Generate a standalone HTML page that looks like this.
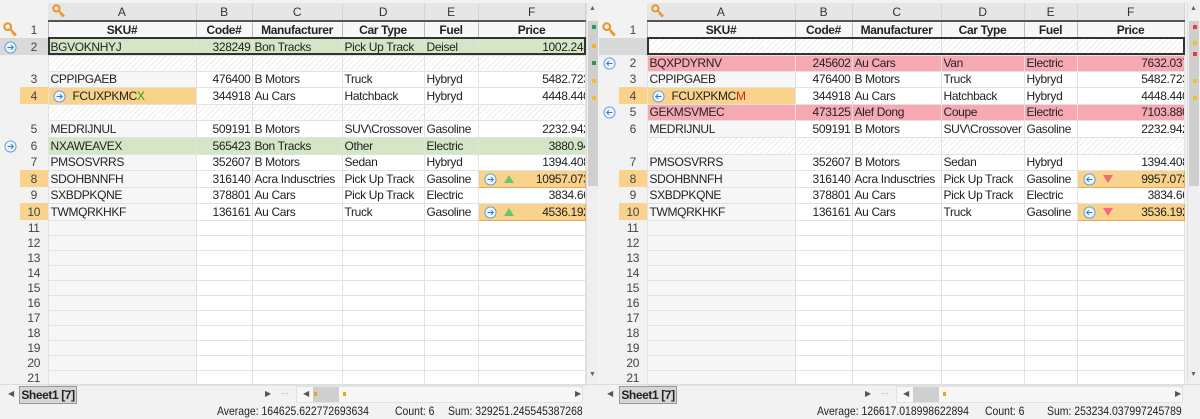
<!DOCTYPE html>
<html><head><meta charset="utf-8"><style>
*{margin:0;padding:0;box-sizing:border-box}
body{width:1200px;height:419px;background:#f2f2f2;font-family:"Liberation Sans",sans-serif;font-size:12px;color:#222;position:relative;overflow:hidden}
.pane{position:absolute;top:3px;width:586px}
table{border-collapse:collapse;table-layout:fixed;width:585px;letter-spacing:-0.35px}
td{border:1px solid #e2e2e2;white-space:nowrap;overflow:hidden;padding:0 2px;line-height:14px;vertical-align:middle;background:#fff}
td.i,td.n{border:none;background:#f2f2f2;text-align:center;color:#444;padding:0}
td.a{background:#f6f6f6}
td.r{text-align:right;padding-right:0}
td.r span.v{margin-right:-5px}
tr.h td{background:#e6e6e6;border:none;border-right:1px solid #d4d4d4;text-align:center;color:#333;border-bottom:2px solid #555}
tr.h td.i,tr.h td.n{background:#f2f2f2;border:none}
tr.t td{font-weight:bold;text-align:center;background:#f7f7f7;border:1px solid #bbb}
tr.t td.i,tr.t td.n{background:#f2f2f2;border:none;font-weight:normal}
tr.g td{background:#d3e6c6}
tr.p td{background:#f7a9b3}
tr.g td.i,tr.g td.n,tr.p td.i,tr.p td.n{background:#f2f2f2}
tr.s td{background:repeating-linear-gradient(135deg,#fff 0 3px,#ececec 3px 4px)}
tr.s td.i,tr.s td.n{background:#f2f2f2}
td.o{background:#f9d38b !important}
td.sel{background:#d9d9d9 !important}
svg.ci{width:13px;height:13px;vertical-align:-3px}
.up{display:inline-block;width:0;height:0;border-left:5px solid transparent;border-right:5px solid transparent;border-bottom:8px solid #6cc56c;vertical-align:0;margin-left:7px}
.dn{display:inline-block;width:0;height:0;border-left:5px solid transparent;border-right:5px solid transparent;border-top:8px solid #f06a7a;vertical-align:0;margin-left:7px}
.fi{float:left;margin-left:3px}
.vs{position:absolute;top:3px;width:12px;height:380px;background:#efefef;border-left:1px solid #ddd}
.th{position:absolute;left:1px;top:18px;width:10px;height:165px;background:#cfcfcf}
.mk{position:absolute;width:4px;height:4px}
.selbox{position:absolute;border:2px solid #333}
.stat{position:absolute;top:404px;font-size:12px;color:#222;white-space:nowrap;transform:scaleX(0.87);transform-origin:0 0}
.tab{position:absolute;top:386px;width:58px;height:18px;background:#d6d6d6;border:1px solid #999;font-weight:bold;font-size:12px;line-height:16px;text-align:center;white-space:nowrap;letter-spacing:-0.4px}
</style></head><body>
<svg width="0" height="0" style="position:absolute"><defs>
<symbol id="kr" viewBox="0 0 16 16"><circle cx="5" cy="5" r="3.6" fill="none" stroke="#e8952a" stroke-width="2.2"/><path d="M7.5 7.5 L14 14 M11 11 L9.5 12.5 M13 13 L11.5 14.5" stroke="#e8952a" stroke-width="2.2" fill="none"/></symbol>
<symbol id="ar" viewBox="0 0 14 14"><circle cx="7" cy="7" r="6" fill="#eef5fc" stroke="#5b9bd5"/><path d="M3.8 7 H10 M7.5 4.5 L10 7 L7.5 9.5" stroke="#3b7dc4" stroke-width="1.1" fill="none"/></symbol>
<symbol id="al" viewBox="0 0 14 14"><circle cx="7" cy="7" r="6" fill="#eef5fc" stroke="#5b9bd5"/><path d="M10.2 7 H4 M6.5 4.5 L4 7 L6.5 9.5" stroke="#3b7dc4" stroke-width="1.1" fill="none"/></symbol>
</defs></svg>

<!-- LEFT PANE -->
<div class="pane" style="left:0">
<table>
<colgroup><col style="width:20px"><col style="width:28px"><col style="width:148px"><col style="width:56px"><col style="width:90px"><col style="width:82px"><col style="width:54px"><col style="width:107px"></colgroup>
<tr class="h" style="height:18px"><td class="i"></td><td class="n"></td><td style="position:relative"><svg style="position:absolute;left:4px;top:1px;width:14px;height:14px"><use href="#kr"/></svg>A</td><td>B</td><td>C</td><td>D</td><td>E</td><td>F</td></tr>
<tr class="t" style="height:17px"><td class="i"><svg style="width:15px;height:15px;vertical-align:-3px"><use href="#kr"/></svg></td><td class="n">1</td><td>SKU#</td><td>Code#</td><td>Manufacturer</td><td>Car Type</td><td>Fuel</td><td>Price</td></tr>
<tr class="g" style="height:17px"><td class="i sel"><svg class="ci"><use href="#ar"/></svg></td><td class="n sel">2</td><td>BGVOKNHYJ</td><td class="r" style="padding-right:1px">328249</td><td>Bon Tracks</td><td>Pick Up Track</td><td>Deisel</td><td class="r"><span class="v">1002.245</span></td></tr>
<tr class="s" style="height:16px"><td class="i"></td><td class="n"></td><td></td><td></td><td></td><td></td><td></td><td></td></tr>
<tr style="height:16px"><td class="i"></td><td class="n">3</td><td class="a">CPPIPGAEB</td><td class="r" style="padding-right:1px">476400</td><td>B Motors</td><td>Truck</td><td>Hybryd</td><td class="r"><span class="v">5482.723</span></td></tr>
<tr style="height:17px"><td class="i"></td><td class="n o">4</td><td class="o">&nbsp;<svg class="ci"><use href="#ar"/></svg>&nbsp; FCUXPKMC<span style="color:#2a9a2a">X</span></td><td class="r" style="padding-right:1px">344918</td><td>Au Cars</td><td>Hatchback</td><td>Hybryd</td><td class="r"><span class="v">4448.440</span></td></tr>
<tr class="s" style="height:16px"><td class="i"></td><td class="n"></td><td></td><td></td><td></td><td></td><td></td><td></td></tr>
<tr style="height:17px"><td class="i"></td><td class="n">5</td><td class="a">MEDRIJNUL</td><td class="r" style="padding-right:1px">509191</td><td>B Motors</td><td>SUV\Crossover</td><td>Gasoline</td><td class="r"><span class="v">2232.942</span></td></tr>
<tr class="g" style="height:17px"><td class="i"><svg class="ci"><use href="#ar"/></svg></td><td class="n">6</td><td>NXAWEAVEX</td><td class="r" style="padding-right:1px">565423</td><td>Bon Tracks</td><td>Other</td><td>Electric</td><td class="r"><span class="v">3880.94</span></td></tr>
<tr style="height:16px"><td class="i"></td><td class="n">7</td><td class="a">PMSOSVRRS</td><td class="r" style="padding-right:1px">352607</td><td>B Motors</td><td>Sedan</td><td>Hybryd</td><td class="r"><span class="v">1394.408</span></td></tr>
<tr style="height:17px"><td class="i"></td><td class="n o">8</td><td class="a">SDOHBNNFH</td><td class="r" style="padding-right:1px">316140</td><td>Acra Indusctries</td><td>Pick Up Track</td><td>Gasoline</td><td class="r o" style="border:1px solid #e8a955"><span class="fi"><svg class="ci"><use href="#ar"/></svg><span class="up"></span></span><span class="v">10957.073</span></td></tr>
<tr style="height:16px"><td class="i"></td><td class="n">9</td><td class="a">SXBDPKQNE</td><td class="r" style="padding-right:1px">378801</td><td>Au Cars</td><td>Pick Up Track</td><td>Electric</td><td class="r"><span class="v">3834.66</span></td></tr>
<tr style="height:17px"><td class="i"></td><td class="n o">10</td><td class="a">TWMQRKHKF</td><td class="r" style="padding-right:1px">136161</td><td>Au Cars</td><td>Truck</td><td>Gasoline</td><td class="r o" style="border:1px solid #e8a955"><span class="fi"><svg class="ci"><use href="#ar"/></svg><span class="up"></span></span><span class="v">4536.192</span></td></tr>
<tr style="height:15px"><td class="i"></td><td class="n">11</td><td class="a"></td><td></td><td></td><td></td><td></td><td></td></tr>
<tr style="height:15px"><td class="i"></td><td class="n">12</td><td class="a"></td><td></td><td></td><td></td><td></td><td></td></tr>
<tr style="height:15px"><td class="i"></td><td class="n">13</td><td class="a"></td><td></td><td></td><td></td><td></td><td></td></tr>
<tr style="height:15px"><td class="i"></td><td class="n">14</td><td class="a"></td><td></td><td></td><td></td><td></td><td></td></tr>
<tr style="height:15px"><td class="i"></td><td class="n">15</td><td class="a"></td><td></td><td></td><td></td><td></td><td></td></tr>
<tr style="height:15px"><td class="i"></td><td class="n">16</td><td class="a"></td><td></td><td></td><td></td><td></td><td></td></tr>
<tr style="height:15px"><td class="i"></td><td class="n">17</td><td class="a"></td><td></td><td></td><td></td><td></td><td></td></tr>
<tr style="height:15px"><td class="i"></td><td class="n">18</td><td class="a"></td><td></td><td></td><td></td><td></td><td></td></tr>
<tr style="height:15px"><td class="i"></td><td class="n">19</td><td class="a"></td><td></td><td></td><td></td><td></td><td></td></tr>
<tr style="height:15px"><td class="i"></td><td class="n">20</td><td class="a"></td><td></td><td></td><td></td><td></td><td></td></tr>
<tr style="height:15px"><td class="i"></td><td class="n">21</td><td class="a"></td><td></td><td></td><td></td><td></td><td></td></tr>
</table>
</div>
<div class="selbox" style="left:48px;top:37px;width:538px;height:18px"></div>
<div class="vs" style="left:586px"><div style="position:absolute;top:2px;left:2px;font-size:7px;color:#666">&#9650;</div><div class="th"></div><div style="position:absolute;top:368px;left:2px;font-size:7px;color:#666">&#9660;</div>
<div class="mk" style="background:#2e9a5a;left:5px;top:22px"></div><div class="mk" style="background:#f0b030;left:5px;top:41px"></div><div class="mk" style="background:#2e9a5a;left:5px;top:58px"></div><div class="mk" style="background:#f0c030;left:5px;top:76px"></div><div class="mk" style="background:#f0c030;left:5px;top:93px"></div></div>

<!-- RIGHT PANE -->
<div class="pane" style="left:599px">
<table>
<colgroup><col style="width:20px"><col style="width:28px"><col style="width:148px"><col style="width:57px"><col style="width:89px"><col style="width:83px"><col style="width:53px"><col style="width:107px"></colgroup>
<tr class="h" style="height:18px"><td class="i"></td><td class="n"></td><td style="position:relative"><svg style="position:absolute;left:4px;top:1px;width:14px;height:14px"><use href="#kr"/></svg>A</td><td>B</td><td>C</td><td>D</td><td>E</td><td>F</td></tr>
<tr class="t" style="height:17px"><td class="i"><svg style="width:15px;height:15px;vertical-align:-3px"><use href="#kr"/></svg></td><td class="n">1</td><td>SKU#</td><td>Code#</td><td>Manufacturer</td><td>Car Type</td><td>Fuel</td><td>Price</td></tr>
<tr class="s" style="height:17px"><td class="i sel"></td><td class="n sel"></td><td></td><td></td><td></td><td></td><td></td><td></td></tr>
<tr class="p" style="height:16px"><td class="i"><svg class="ci"><use href="#al"/></svg></td><td class="n">2</td><td>BQXPDYRNV</td><td class="r" style="padding-right:1px">245602</td><td>Au Cars</td><td>Van</td><td>Electric</td><td class="r"><span class="v">7632.037</span></td></tr>
<tr style="height:16px"><td class="i"></td><td class="n">3</td><td class="a">CPPIPGAEB</td><td class="r" style="padding-right:1px">476400</td><td>B Motors</td><td>Truck</td><td>Hybryd</td><td class="r"><span class="v">5482.723</span></td></tr>
<tr style="height:17px"><td class="i"></td><td class="n o">4</td><td class="o">&nbsp;<svg class="ci"><use href="#al"/></svg>&nbsp; FCUXPKMC<span style="color:#e02020">M</span></td><td class="r" style="padding-right:1px">344918</td><td>Au Cars</td><td>Hatchback</td><td>Hybryd</td><td class="r"><span class="v">4448.440</span></td></tr>
<tr class="p" style="height:16px"><td class="i"><svg class="ci"><use href="#al"/></svg></td><td class="n">5</td><td>GEKMSVMEC</td><td class="r" style="padding-right:1px">473125</td><td>Alef Dong</td><td>Coupe</td><td>Electric</td><td class="r"><span class="v">7103.880</span></td></tr>
<tr style="height:17px"><td class="i"></td><td class="n">6</td><td class="a">MEDRIJNUL</td><td class="r" style="padding-right:1px">509191</td><td>B Motors</td><td>SUV\Crossover</td><td>Gasoline</td><td class="r"><span class="v">2232.942</span></td></tr>
<tr class="s" style="height:17px"><td class="i"></td><td class="n"></td><td></td><td></td><td></td><td></td><td></td><td></td></tr>
<tr style="height:16px"><td class="i"></td><td class="n">7</td><td class="a">PMSOSVRRS</td><td class="r" style="padding-right:1px">352607</td><td>B Motors</td><td>Sedan</td><td>Hybryd</td><td class="r"><span class="v">1394.408</span></td></tr>
<tr style="height:17px"><td class="i"></td><td class="n o">8</td><td class="a">SDOHBNNFH</td><td class="r" style="padding-right:1px">316140</td><td>Acra Indusctries</td><td>Pick Up Track</td><td>Gasoline</td><td class="r o" style="border:1px solid #e8a955"><span class="fi"><svg class="ci"><use href="#al"/></svg><span class="dn"></span></span><span class="v">9957.073</span></td></tr>
<tr style="height:16px"><td class="i"></td><td class="n">9</td><td class="a">SXBDPKQNE</td><td class="r" style="padding-right:1px">378801</td><td>Au Cars</td><td>Pick Up Track</td><td>Electric</td><td class="r"><span class="v">3834.66</span></td></tr>
<tr style="height:17px"><td class="i"></td><td class="n o">10</td><td class="a">TWMQRKHKF</td><td class="r" style="padding-right:1px">136161</td><td>Au Cars</td><td>Truck</td><td>Gasoline</td><td class="r o" style="border:1px solid #e8a955"><span class="fi"><svg class="ci"><use href="#al"/></svg><span class="dn"></span></span><span class="v">3536.192</span></td></tr>
<tr style="height:15px"><td class="i"></td><td class="n">11</td><td class="a"></td><td></td><td></td><td></td><td></td><td></td></tr>
<tr style="height:15px"><td class="i"></td><td class="n">12</td><td class="a"></td><td></td><td></td><td></td><td></td><td></td></tr>
<tr style="height:15px"><td class="i"></td><td class="n">13</td><td class="a"></td><td></td><td></td><td></td><td></td><td></td></tr>
<tr style="height:15px"><td class="i"></td><td class="n">14</td><td class="a"></td><td></td><td></td><td></td><td></td><td></td></tr>
<tr style="height:15px"><td class="i"></td><td class="n">15</td><td class="a"></td><td></td><td></td><td></td><td></td><td></td></tr>
<tr style="height:15px"><td class="i"></td><td class="n">16</td><td class="a"></td><td></td><td></td><td></td><td></td><td></td></tr>
<tr style="height:15px"><td class="i"></td><td class="n">17</td><td class="a"></td><td></td><td></td><td></td><td></td><td></td></tr>
<tr style="height:15px"><td class="i"></td><td class="n">18</td><td class="a"></td><td></td><td></td><td></td><td></td><td></td></tr>
<tr style="height:15px"><td class="i"></td><td class="n">19</td><td class="a"></td><td></td><td></td><td></td><td></td><td></td></tr>
<tr style="height:15px"><td class="i"></td><td class="n">20</td><td class="a"></td><td></td><td></td><td></td><td></td><td></td></tr>
<tr style="height:15px"><td class="i"></td><td class="n">21</td><td class="a"></td><td></td><td></td><td></td><td></td><td></td></tr>
</table>
</div>
<div class="selbox" style="left:647px;top:37px;width:538px;height:18px"></div>
<div class="vs" style="left:1187px"><div style="position:absolute;top:2px;left:2px;font-size:7px;color:#666">&#9650;</div><div class="th"></div><div style="position:absolute;top:368px;left:2px;font-size:7px;color:#666">&#9660;</div>
<div class="mk" style="background:#e04040;left:5px;top:22px"></div><div class="mk" style="background:#f0c030;left:5px;top:38px"></div><div class="mk" style="background:#e04040;left:5px;top:49px"></div><div class="mk" style="background:#f0c030;left:5px;top:76px"></div><div class="mk" style="background:#f0c030;left:5px;top:93px"></div></div>

<!-- BOTTOM BARS -->
<div style="position:absolute;left:0;top:384px;width:1200px;height:1px;background:#ddd"></div>
<div style="position:absolute;left:8px;top:389px;font-size:8px;color:#555">&#9664;</div>
<div class="tab" style="left:19px">Sheet1 [7]</div>
<div style="position:absolute;left:265px;top:389px;font-size:8px;color:#555">&#9654;</div>
<div style="position:absolute;left:281px;top:386px;font-size:9px;color:#aaa">...</div>
<div style="position:absolute;left:296px;top:386px;width:287px;height:17px;background:#f7f7f7;border:1px solid #e2e2e2"><div style="position:absolute;left:6px;top:2px;font-size:8px;color:#555">&#9664;</div><div style="position:absolute;left:16px;top:0;width:26px;height:15px;background:#cfcfcf"></div><div style="position:absolute;left:17px;top:5px;width:3px;height:4px;background:#f0a020"></div><div style="position:absolute;left:46px;top:5px;width:3px;height:4px;background:#f0a020"></div><div style="position:absolute;left:278px;top:2px;font-size:8px;color:#555">&#9654;</div></div>
<div class="stat" style="left:217px">Average: 164625.622772693634</div>
<div class="stat" style="left:395px">Count: 6</div>
<div class="stat" style="left:448px">Sum: 329251.245545387268</div>

<div style="position:absolute;left:607px;top:389px;font-size:8px;color:#555">&#9664;</div>
<div class="tab" style="left:619px">Sheet1 [7]</div>
<div style="position:absolute;left:865px;top:389px;font-size:8px;color:#555">&#9654;</div>
<div style="position:absolute;left:881px;top:386px;font-size:9px;color:#aaa">...</div>
<div style="position:absolute;left:896px;top:386px;width:287px;height:17px;background:#f7f7f7;border:1px solid #e2e2e2"><div style="position:absolute;left:6px;top:2px;font-size:8px;color:#555">&#9664;</div><div style="position:absolute;left:16px;top:0;width:26px;height:15px;background:#cfcfcf"></div><div style="position:absolute;left:46px;top:5px;width:3px;height:4px;background:#f0a020"></div><div style="position:absolute;left:278px;top:2px;font-size:8px;color:#555">&#9654;</div></div>
<div class="stat" style="left:817px">Average: 126617.018998622894</div>
<div class="stat" style="left:985px">Count: 6</div>
<div class="stat" style="left:1047px">Sum: 253234.037997245789</div>
</body></html>
